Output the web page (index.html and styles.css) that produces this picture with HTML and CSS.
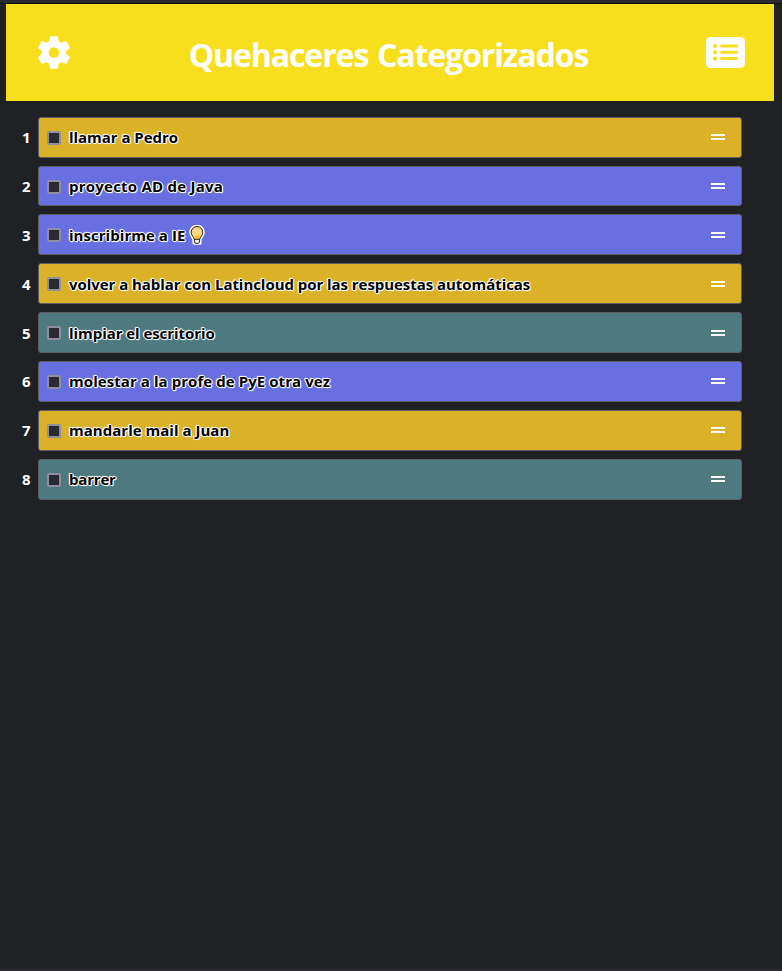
FILE: index.html
```
<!DOCTYPE html>
<html lang="es">
<head>
<meta charset="utf-8">
<title>Quehaceres Categorizados</title>
<link rel="stylesheet" href="styles.css">
</head>
<body>
<header class="header">
  <svg class="gear" viewBox="2 2 20 20"><path d="M19.14 12.94c.04-.3.06-.61.06-.94 0-.32-.02-.64-.07-.94l2.03-1.58a.49.49 0 0 0 .12-.61l-1.92-3.32a.488.488 0 0 0-.59-.22l-2.39.96c-.5-.38-1.03-.7-1.62-.94l-.36-2.54a.484.484 0 0 0-.48-.41h-3.84c-.24 0-.43.17-.47.41l-.36 2.54c-.59.24-1.13.57-1.62.94l-2.39-.96c-.22-.08-.47 0-.59.22L2.74 8.87c-.12.21-.08.47.12.61l2.03 1.58c-.05.3-.09.63-.09.94s.02.64.07.94l-2.03 1.58a.49.49 0 0 0-.12.61l1.92 3.32c.12.22.37.29.59.22l2.39-.96c.5.38 1.03.7 1.62.94l.36 2.54c.05.24.24.41.48.41h3.84c.24 0 .44-.17.47-.41l.36-2.54c.59-.24 1.13-.56 1.62-.94l2.39.96c.22.08.47 0 .59-.22l1.92-3.32c.12-.22.07-.47-.12-.61zM12 15.1a3.1 3.1 0 1 1 0-6.2 3.1 3.1 0 0 1 0 6.2z"/></svg>
  <h1 class="title">Quehaceres Categorizados</h1>
  <svg class="list-icon" viewBox="0 0 39 31"><rect width="39" height="31" rx="4.5" fill="#fff"/><g fill="#f7df1e"><circle cx="9" cy="9" r="2.1"/><circle cx="9" cy="15.3" r="2.1"/><circle cx="9" cy="21.6" r="2.1"/><rect x="14" y="7.5" width="18" height="3" rx="1.5"/><rect x="14" y="13.8" width="18" height="3" rx="1.5"/><rect x="14" y="20.1" width="18" height="3" rx="1.5"/></g></svg>
</header>
<main class="tasks">
  <div class="row"><span class="num">1</span><div class="task gold"><i class="box"></i><span class="text t1">llamar a Pedro</span><i class="grip"></i></div></div>
  <div class="row"><span class="num">2</span><div class="task violet"><i class="box"></i><span class="text t2">proyecto AD de Java</span><i class="grip"></i></div></div>
  <div class="row"><span class="num">3</span><div class="task violet"><i class="box"></i><span class="text t3">inscribirme a IE</span><svg class="bulb" viewBox="0 0 16 20"><path d="M5 18.2V14.8C4.8 12.6 1.8 10.8 1.8 7.3a6.2 6.2 0 0 1 12.4 0c0 3.5-3 5.3-3.2 7.5v3.4z" fill="#ffd477" stroke="#fff" stroke-width="3.2" stroke-linejoin="round"/><path d="M5.4 14V17l1 1.3h3.2l1-1.3v-3z" fill="#eee" stroke="#222" stroke-width="1"/><path d="M5.2 14.2C5 12 2.2 10.7 2.2 7.3a5.8 5.8 0 0 1 11.6 0c0 3.4-2.8 4.7-3 6.9z" fill="#ffd783" stroke="#222" stroke-width="1"/><path d="M5.7 10.2l1.2 1 1.1-.8 1.1.8 1.2-1-.5 3.4H6.2z" fill="#ffb900"/></svg><i class="grip"></i></div></div>
  <div class="row"><span class="num">4</span><div class="task gold"><i class="box"></i><span class="text t4">volver a hablar con Latincloud por las respuestas automáticas</span><i class="grip"></i></div></div>
  <div class="row"><span class="num">5</span><div class="task teal"><i class="box"></i><span class="text t5">limpiar el escritorio</span><i class="grip"></i></div></div>
  <div class="row"><span class="num">6</span><div class="task violet"><i class="box"></i><span class="text t6">molestar a la profe de PyE otra vez</span><i class="grip"></i></div></div>
  <div class="row"><span class="num">7</span><div class="task gold"><i class="box"></i><span class="text t7">mandarle mail a Juan</span><i class="grip"></i></div></div>
  <div class="row"><span class="num">8</span><div class="task teal"><i class="box"></i><span class="text t8">barrer</span><i class="grip"></i></div></div>
</main>
</body>
</html>
```
FILE: styles.css
```
* { box-sizing: border-box; }
html { background: #202124; }
body {
  margin: 0;
  height: 971px;
  padding: 0 8px 0 6px;
  border-top: 3px solid #2b2a33;
  border-bottom: 2px solid #2b2a33;
  background: #202124;
  font-family: "Open Sans", "Noto Sans", sans-serif;
  font-weight: 700;
  overflow: hidden;
  box-shadow: inset 0 1px #0c0c0d;
}
.header {
  display: flex;
  align-items: center;
  justify-content: space-between;
  height: 97px;
  margin-top: 1px;
  padding: 0 29px 0 31px;
  background: #f7df1e;
  color: #fff;
}
.gear { width: 34px; height: 35px; fill: #fff; }
.list-icon { width: 39px; height: 31px; }
.title {
  margin: 4px 0 0;
  font-size: 32px;
  line-height: 44px;
  letter-spacing: -1.1px;
  word-spacing: 1.5px;
  white-space: nowrap;
}
.tasks {
  display: flex;
  flex-direction: column;
  gap: 8px;
  padding: 15.75px 32px 0 10px;
}
.row { display: flex; align-items: center; height: 40.86px; }
.num { width: 22px; padding-left: 6px; color: #fff; font-size: 15px; line-height: 20px; }
.task {
  display: flex;
  flex: 1;
  align-items: center;
  height: 100%;
  padding: 0 16px 0 8px;
  border: 1px solid #5f6064;
  border-radius: 3px;
}
.gold { background: #dbb128; }
.violet { background: #6870e1; }
.teal { background: #4d797f; }
.box { width: 14px; height: 14px; margin: 1px 8px 0 0; border: 2px solid #8f8f9d; border-radius: 2px; background: #2b2a33; }
.text {
  color: #000;
  font-size: 15px;
  line-height: 20px;
  white-space: nowrap;
  text-shadow: 1px 0 #fff, -1px 0 #fff, 0 1px #fff, 0 -1px #fff, 1px 1px 1px #fff, -1px -1px 1px #fff;
}
.t1 { letter-spacing: -0.04px; }
.t2 { letter-spacing: 0.23px; }
.t3 { letter-spacing: 0.04px; }
.t4 { letter-spacing: -0.05px; }
.t5 { letter-spacing: -0.06px; }
.t6 { letter-spacing: 0.07px; }
.t7 { letter-spacing: 0.02px; }
.t8 { letter-spacing: -0.2px; }
.bulb { width: 16px; height: 20px; margin-left: 4px; }
.grip { width: 14px; height: 6px; margin-left: auto; border: solid #fff; border-width: 2px 0; }
```
